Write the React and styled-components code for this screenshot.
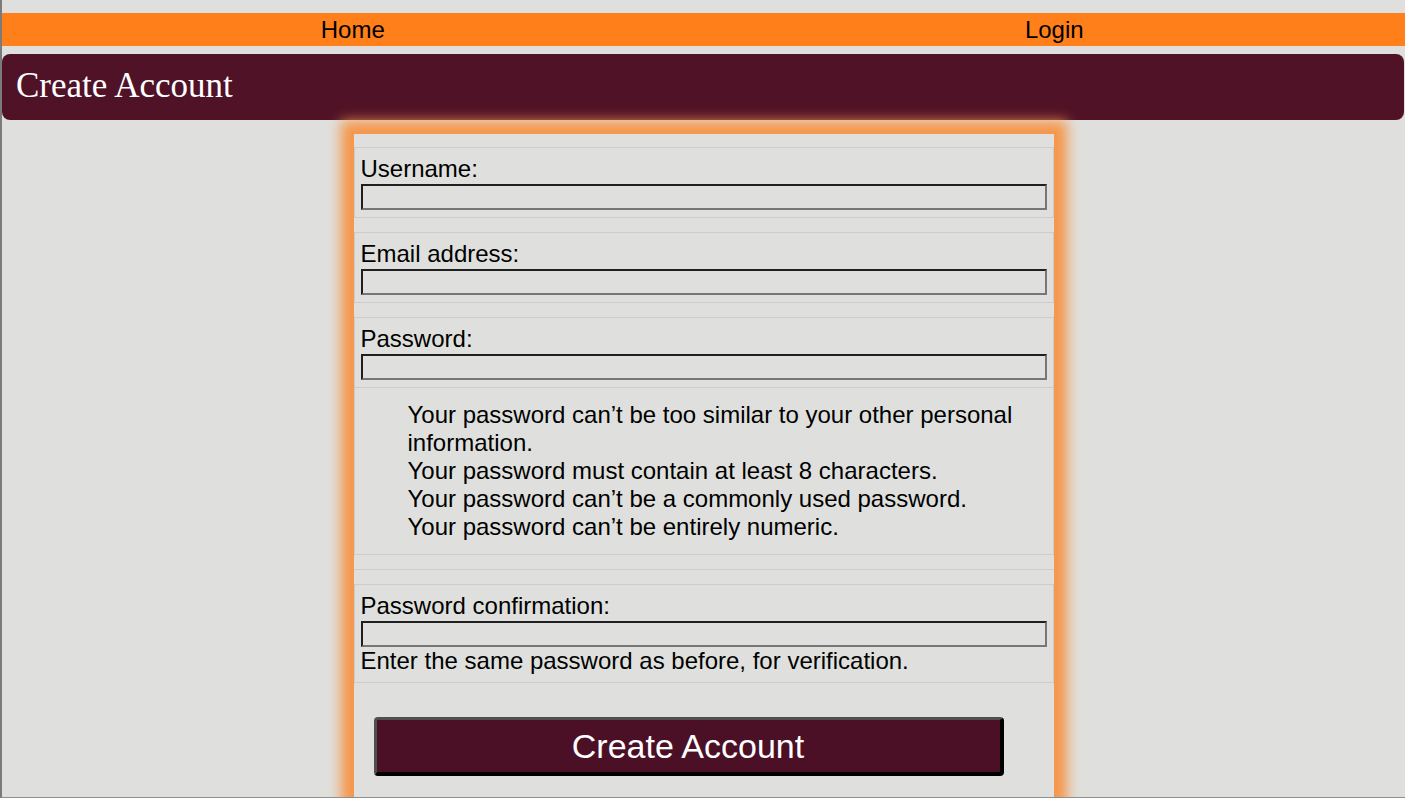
import React from "react";
import styled, { createGlobalStyle } from "styled-components";

const GlobalStyle = createGlobalStyle`
  html, body {
    margin: 0;
    padding: 0;
    background: #dfe0dd;
  }
  body {
    font-family: "Liberation Sans", Arial, sans-serif;
    color: #000;
  }
`;

const Page = styled.div`
  box-sizing: border-box;
  height: 100vh;
  overflow: hidden;
  padding-top: 13px;
  border-left: 2px solid #7b7b7b;
  border-bottom: 1px solid #8f8f8f;
`;

const Nav = styled.nav`
  display: flex;
  align-items: center;
  height: 33px;
  background: #ff7f1a;
`;

const NavLink = styled.a`
  flex: 1;
  text-align: center;
  font-size: 24px;
  color: #000;
  text-decoration: none;
  cursor: pointer;
`;

const Header = styled.header`
  margin-top: 8px;
  padding: 12px 14px 14px;
  background: #501227;
  border-radius: 8px;
  margin-right: 1px;
`;

const Title = styled.h1`
  margin: 0;
  font-family: "Liberation Serif", "Times New Roman", serif;
  font-weight: normal;
  font-size: 35px;
  line-height: 40px;
  color: #fff;
`;

const Card = styled.form`
  width: 700px;
  margin: 14px auto 0;
  padding: 13px 0 40px;
  background: #dfe0dd;
  box-shadow: 0 0 12px 13px #f6964a;
`;

const Row = styled.div`
  border: 1px solid #cbcccb;
  padding: 7px 6px;
  margin-bottom: ${(p) => (p.$attached ? 0 : "14px")};
`;

const Label = styled.label`
  display: block;
  font-size: 24px;
  line-height: 28px;
`;

const Input = styled.input`
  display: block;
  box-sizing: border-box;
  width: 100%;
  height: 26px;
  margin: 1px 0 0;
  padding: 0 4px;
  background: transparent;
  border-style: solid;
  border-width: 2px;
  border-color: #1f1f1f #767676 #767676 #1f1f1f;
  font-family: inherit;
  font-size: 18px;
  outline: none;
`;

const Help = styled.span`
  display: block;
  font-size: 24px;
  line-height: 28px;
`;

const HelpList = styled.ul`
  list-style: none;
  margin: 0 0 14px;
  padding: 13px 14px 13px 53px;
  border: 1px solid #cbcccb;
  border-top: none;
  font-size: 24px;
  line-height: 28px;
`;

const EmptyRow = styled.div`
  height: 0;
  border-top: 1px solid #cbcccb;
  margin-bottom: 14px;
`;

const SubmitButton = styled.button`
  display: block;
  box-sizing: border-box;
  width: 630px;
  height: 59px;
  margin: 34px 0 0 20px;
  padding: 0;
  background: #4c1026;
  color: #fff;
  font-family: "Liberation Sans", Arial, sans-serif;
  font-size: 34px;
  border-style: solid;
  border-width: 3px 4px 4px 3px;
  border-color: #4f4f4f #000 #000 #4f4f4f;
  border-radius: 4px;
  cursor: pointer;
`;

const fields = [
  { id: "username", label: "Username:", type: "text" },
  { id: "email", label: "Email address:", type: "email" },
];

const rules = [
  "Your password can’t be too similar to your other personal information.",
  "Your password must contain at least 8 characters.",
  "Your password can’t be a commonly used password.",
  "Your password can’t be entirely numeric.",
];

export default function App() {
  return (
    <>
      <GlobalStyle />
      <Page>
        <Nav>
          <NavLink>Home</NavLink>
          <NavLink>Login</NavLink>
        </Nav>
        <Header>
          <Title>Create Account</Title>
        </Header>
        <Card onSubmit={(e) => e.preventDefault()}>
          {fields.map((f) => (
            <Row key={f.id}>
              <Label htmlFor={f.id}>{f.label}</Label>
              <Input id={f.id} type={f.type} />
            </Row>
          ))}
          <Row $attached>
            <Label htmlFor="password1">Password:</Label>
            <Input id="password1" type="password" />
          </Row>
          <HelpList>
            {rules.map((r) => (
              <li key={r}>{r}</li>
            ))}
          </HelpList>
          <EmptyRow />
          <Row>
            <Label htmlFor="password2">Password confirmation:</Label>
            <Input id="password2" type="password" />
            <Help>Enter the same password as before, for verification.</Help>
          </Row>
          <SubmitButton type="submit">Create Account</SubmitButton>
        </Card>
      </Page>
    </>
  );
}
